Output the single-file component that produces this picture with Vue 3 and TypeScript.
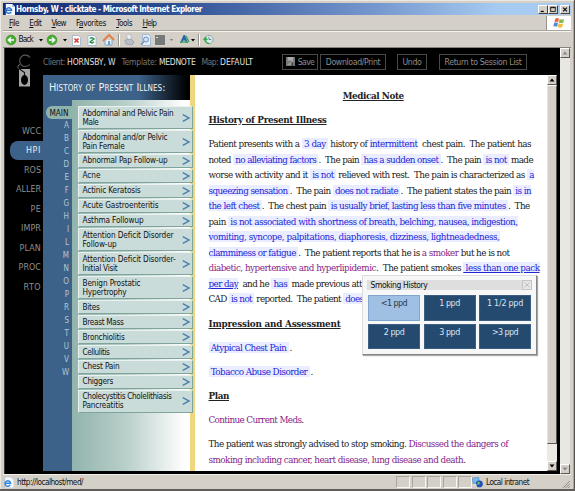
<script setup lang="ts">
import type { Directive } from 'vue'

type Kind = 'text' | 'field' | 'active' | 'option'
interface Segment { kind: Kind; text: string }
interface Line { width: number; segments: Segment[] }
interface Topic { lines: { text: string; width: number }[] }

// Spaces the letters of an element so that it fills the given width.
const vFit: Directive<HTMLElement, number> = {
  mounted(el, binding) {
    const count = (el.textContent ?? '').length
    const natural = el.getBoundingClientRect().width
    if (count > 0) el.style.letterSpacing = `${(binding.value - natural) / count}px`
  },
}

const t = (text: string): Segment => ({ kind: 'text', text })
const f = (text: string): Segment => ({ kind: 'field', text })
const o = (text: string): Segment => ({ kind: 'option', text })
const a = (text: string): Segment => ({ kind: 'active', text })

const history: Line[] = [
  { width: 322.5, segments: [t('Patient presents with a '), f(' 3 day '), t(' history of '), f('intermittent'), t('  chest pain.  The patient has')] },
  { width: 324.5, segments: [t('noted '), f(' no alleviating factors '), t('.  The pain '), f(' has a sudden onset '), t('.  The pain '), f(' is not '), t(' made')] },
  { width: 325.5, segments: [t('worse with activity and it '), f(' is not '), t(' relieved with rest.  The pain is characterized as '), f(' a')] },
  { width: 322.5, segments: [f('squeezing sensation '), t('.  The pain '), f(' does not radiate '), t('.  The patient states the pain '), f(' is in')] },
  { width: 321, segments: [f('the left chest '), t('.  The chest pain '), f(' is usually brief, lasting less than five minutes '), t('.  The')] },
  { width: 309, segments: [t('pain '), f(' is not associated with shortness of breath, belching, nausea, indigestion,')] },
  { width: 291, segments: [f('vomiting, syncope, palpitations, diaphoresis, dizziness, lightneadedness,')] },
  { width: 301, segments: [f('clamminess or fatigue '), t('.  The patient reports that he is '), o('a smoker'), t(' but he is not')] },
  { width: 331, segments: [o('diabetic, hypertensive and hyperlipidemic'), t('.  The patient smokes '), a(' less than one pack')] },
  { width: 153.5, segments: [a('per day'), t('  and he '), f(' has '), t(' made previous att')] },
  { width: 155, segments: [t('CAD '), f(' is not '), t(' reported.  The patient '), f(' does')] },
]
const impressions = [
  { text: ' Atypical Chest Pain ', width: 80 },
  { text: ' Tobacco Abuse Disorder ', width: 101 },
]
const advice: Line[] = [
  { width: 299.5, segments: [t('The patient was strongly advised to stop smoking. '), o('Discussed the dangers of')] },
  { width: 257, segments: [o('smoking including cancer, heart disease, lung disease and death'), t('.')] },
]

const topics: Topic[] = [
  { lines: [{ text: 'Abdominal and Pelvic Pain', width: 91 }, { text: 'Male', width: 16 }] },
  { lines: [{ text: 'Abdominal and/or Pelvic', width: 85 }, { text: 'Pain Female', width: 42 }] },
  { lines: [{ text: 'Abnormal Pap Follow-up', width: 85 }] },
  { lines: [{ text: 'Acne', width: 18 }] },
  { lines: [{ text: 'Actinic Keratosis', width: 58 }] },
  { lines: [{ text: 'Acute Gastroenteritis', width: 76 }] },
  { lines: [{ text: 'Asthma Followup', width: 61 }] },
  { lines: [{ text: 'Attention Deficit Disorder', width: 91 }, { text: 'Follow-up', width: 34 }] },
  { lines: [{ text: 'Attention Deficit Disorder-', width: 93 }, { text: 'Initial Visit', width: 35 }] },
  { lines: [{ text: 'Benign Prostatic', width: 58 }, { text: 'Hypertrophy', width: 44 }] },
  { lines: [{ text: 'Bites', width: 17 }] },
  { lines: [{ text: 'Breast Mass', width: 41 }] },
  { lines: [{ text: 'Bronchiolitis', width: 42 }] },
  { lines: [{ text: 'Cellulitis', width: 27 }] },
  { lines: [{ text: 'Chest Pain', width: 37 }] },
  { lines: [{ text: 'Chiggers', width: 30.5 }] },
  { lines: [{ text: 'Cholecystitis Cholelithiasis', width: 89 }, { text: 'Pancreatitis', width: 41 }] },
]

const letters = 'ABCDEFGHILMNOPRSTUVW'.split('')
const sections = [
  { name: 'WCC', width: 19 }, { name: 'HPI', width: 15 }, { name: 'ROS', width: 17 },
  { name: 'ALLER', width: 25 }, { name: 'PE', width: 10.5 }, { name: 'IMPR', width: 20 },
  { name: 'PLAN', width: 21.5 }, { name: 'PROC', width: 22.5 }, { name: 'RTO', width: 17.5 },
]
const menus = [
  { key: 'F', rest: 'ile', pre: '', width: 10 }, { key: 'E', rest: 'dit', pre: '', width: 12 },
  { key: 'V', rest: 'iew', pre: '', width: 14 }, { key: 'a', rest: 'vorites', pre: 'F', width: 30 },
  { key: 'T', rest: 'ools', pre: '', width: 16 }, { key: 'H', rest: 'elp', pre: '', width: 13.5 },
]
const facts = [
  { label: 'Client:', labelWidth: 22, value: 'HORNSBY, W', width: 48.5 },
  { label: 'Template:', labelWidth: 35.5, value: 'MEDNOTE', width: 36.5 },
  { label: 'Map:', labelWidth: 16.5, value: 'DEFAULT', width: 33 },
]
const choices = [
  { text: '<1 ppd', width: 26 }, { text: '1 ppd', width: 20.5 }, { text: '1 1/2 ppd', width: 36 },
  { text: '2 ppd', width: 20.5 }, { text: '3 ppd', width: 20.5 }, { text: '>3 ppd', width: 26 },
]
</script>

<template>
  <div class="window">
    <header class="titlebar">
      <svg class="ie" viewBox="0 0 12 12"><path d="M2 0h7l3 3v9H2z" fill="#f5f8ff" /><path d="M9 0v3h3" fill="#9cb4dc" /><path d="M7.8 8.7A3 3 0 1 1 8.2 6.7H2.5" fill="none" stroke="#2c78d4" stroke-width="1.6" /></svg>
      <span v-fit="186" class="caption">Hornsby, W : clicktate - Microsoft Internet Explorer</span>
      <div class="controls">
        <i><svg viewBox="0 0 10 9"><path d="M2 7h4" stroke="#000" stroke-width="1.6" /></svg></i>
        <i><svg viewBox="0 0 10 9"><path d="M2 1.5h6v5.5H2zM2 2.2h6" stroke="#000" fill="none" /></svg></i>
        <i class="apart"><svg viewBox="0 0 10 9"><path d="M2.5 2l5 5M7.5 2l-5 5" stroke="#000" stroke-width="1.3" /></svg></i>
      </div>
    </header>

    <nav class="menubar">
      <span v-for="m in menus" :key="m.rest" v-fit="m.width" class="menu">{{ m.pre }}<u>{{ m.key }}</u>{{ m.rest }}</span>
      <div class="throbber">
        <svg viewBox="0 0 14 14"><path d="M2.6 2Q5 .5 7 2L6 6.2Q4 5 1.6 6z" fill="#ec6a3c" /><path d="M7.8 2.3Q10 3.7 13 2.4L12 6.7Q9 7.7 6.8 6.4z" fill="#83b856" /><path d="M1.4 6.8Q4 5.8 5.8 7.1L4.8 11.4Q2.5 10 .3 11.2z" fill="#4a8cdc" /><path d="M6.6 7.3Q9 8.7 11.8 7.6L10.8 12Q8 13.2 5.6 11.7z" fill="#f4bd3b" /></svg>
      </div>
    </nav>

    <div class="toolbar">
      <svg width="198" height="16" viewBox="0 0 198 16">
        <g fill="#48ad32" stroke="#2c8b22" stroke-width=".6"><circle cx="7" cy="8" r="4.9" /><circle cx="48" cy="8" r="4.9" /></g>
        <path d="M10 8H5M7 5.4L4.3 8 7 10.6M45 8h5M48 5.4L50.7 8 48 10.6" fill="none" stroke="#fff" stroke-width="1.4" />
        <path d="M35 7h4l-2 2.4zM59 7h4l-2 2.4z" />
        <g stroke="#8da6c8" stroke-width=".7" fill="#fff"><path d="M68.500 3.500h6l2 2v8h-8z" /><path d="M84 3.500h6l2 2v8h-8z" /></g>
        <path d="M70.500 6.500l4 4M74.500 6.500l-4 4" stroke="#e03728" stroke-width="1.6" />
        <path d="M86 6.500q2-1.800 4 .4l-2 1.600M90 9.800q-2 2-4 .2l2-1.800" fill="none" stroke="#26944a" stroke-width="1.500" />
        <path d="M101 8v5h7V8" fill="#e7f0fa" stroke="#7fa6ca" /><path d="M99 9l6-6 5 5" fill="none" stroke="#df814b" stroke-width="2" /><path d="M104 9h2v4h-2z" fill="#679ccf" />
        <path d="M114.500 2v12" stroke="#96938d" /><path d="M115.500 2v12" stroke="#fff" />
        <path d="M122 3l4-1 2 5-3 2z" fill="#edf0f4" stroke="#a0a7af" stroke-width=".6" /><path d="M121 8l6-1 3 3-2 3-6-1z" fill="#b7bec9" stroke="#858e9b" stroke-width=".6" />
        <path d="M138.500 2.500h6l2 2v9h-8z" fill="#e4eefb" stroke="#88a7d3" stroke-width=".7" /><circle cx="142" cy="7.500" r="2.500" fill="#cee1f5" stroke="#6f8fb3" /><path d="M140 9.500l-3 3" stroke="#6f8fb3" stroke-width="1.500" />
        <path d="M151 3h10v10h-10z" fill="#77787a" /><path d="M152 5h2v1h-2z" fill="#ddd" /><path d="M166 7h3l-1.500 2z" fill="#777" />
        <path d="M176 11l3.500-8h1.500l3 8h-2l-.8-2.500H179L178 11z" fill="#2768ad" /><path d="M182 4l3 6M176 10h7" stroke="#45a46d" stroke-width="1.500" /><path d="M187 7h4l-2 2.400z" />
        <path d="M194.500 2v12" stroke="#96938d" /><path d="M195.500 2v12" stroke="#fff" />
      </svg>
      <span v-fit="14.500" class="back">Back</span>
      <svg class="recent" viewBox="0 0 12 12"><circle cx="6.500" cy="6" r="4.500" fill="#dcebe9" stroke="#7aa8ac" /><path d="M6.500 3.200V6h2.500" fill="none" stroke="#5b7f8e" /><path d="M7 10.500Q2.200 10 2.500 5M.7 6.600l2-2.500 2 2.500" fill="none" stroke="#36a84f" stroke-width="1.600" /></svg>
    </div>

    <div class="viewport">
      <div class="page">
        <div class="rail">
          <svg class="logo" viewBox="0 0 16 36"><path d="M14 4.500a5.700 5.700 0 1 0 -.3 7M4 11.500Q.5 13 2.500 15.500" fill="none" stroke="#5c5c5c" stroke-width="1.100" /><path d="M3 16h11v17.500H3z" fill="#a5a5a5" /><path d="M3.500 16l5 3.500v4" fill="none" stroke="#111" stroke-width="1.100" /><ellipse cx="8.500" cy="27" rx="3.500" ry="5" /></svg>
          <div class="sections">
            <div v-for="s in sections" :key="s.name" class="section" :class="{ current: s.name === 'HPI' }"><span v-fit="s.width">{{ s.name }}</span></div>
          </div>
        </div>

        <main class="main">
          <div class="actions">
            <div class="facts">
              <div v-for="x in facts" :key="x.label" class="fact"><span v-fit="x.labelWidth">{{ x.label }}</span><b v-fit="x.width">{{ x.value }}</b></div>
            </div>
            <div class="action save"><svg viewBox="0 0 10 10"><path d="M0 0h10v10H0z" fill="#777" /><path d="M2 0h6v4H2z" fill="#aaa" /><path d="M1 9l7-6v6z" fill="#999" /><path d="M6 6h2v4H6z" fill="#444" /></svg><span v-fit="16.500">Save</span></div>
            <div class="action print"><span v-fit="54.500">Download/Print</span></div>
            <div class="action undo"><span v-fit="19">Undo</span></div>
            <div class="action sessions"><span v-fit="77">Return to Session List</span></div>
          </div>

          <div class="workspace">
            <aside class="browser">
              <div class="heading"><span v-fit="116.500">History of Present Illnes:</span></div>
              <div class="columns">
                <div class="letters">
                  <div class="tab"><span v-fit="19">MAIN</span></div>
                  <div v-for="l in letters" :key="l" class="letter">{{ l }}</div>
                </div>
                <div class="topics">
                  <div v-for="(topic, i) in topics" :key="i" class="topic" :class="{ tall: topic.lines.length > 1 }">
                    <div class="topic-text"><div v-for="l in topic.lines" :key="l.text"><span v-fit="l.width">{{ l.text }}</span></div></div>
                    <svg viewBox="0 0 8 8"><path d="M.8 .7L6.800 4 .8 7.300" fill="none" stroke="#477fae" stroke-width="1.400" /></svg>
                  </div>
                </div>
              </div>
            </aside>

            <article class="note">
              <h1><span v-fit="61">Medical Note</span></h1>
              <h2><span v-fit="118">History of Present Illness</span></h2>
              <div class="para history">
                <div v-for="(line, i) in history" :key="i" class="line"><span v-fit="line.width"><span v-for="(s, j) in line.segments" :key="j" :class="s.kind">{{ s.text }}</span></span></div>
              </div>
              <h2><span v-fit="132">Impression and Assessment</span></h2>
              <p v-for="x in impressions" :key="x.text"><span v-fit="x.width" class="field">{{ x.text }}</span><span class="stop">.</span></p>
              <h2><span v-fit="20.500">Plan</span></h2>
              <p><span v-fit="95"><span class="option">Continue Current Meds</span>.</span></p>
              <div class="para">
                <div v-for="(line, i) in advice" :key="i" class="line"><span v-fit="line.width"><span v-for="(s, j) in line.segments" :key="j" :class="s.kind">{{ s.text }}</span></span></div>
              </div>
            </article>

            <div class="scroll inner">
              <i class="arrow"><svg viewBox="0 0 8 8"><path d="M1.500 5.500h5L4 2.500z" /></svg></i>
              <div class="thumb"></div><div class="track"></div>
              <i class="arrow"><svg viewBox="0 0 8 8"><path d="M1.500 2.500h5L4 5.500z" /></svg></i>
            </div>
          </div>
        </main>
      </div>
      <div class="scroll outer">
        <i class="arrow"><svg viewBox="0 0 8 8"><path d="M1.500 5.500h5L4 2.500z" fill="#888" /></svg></i>
        <div class="track"></div>
        <i class="arrow"><svg viewBox="0 0 8 8"><path d="M1.500 2.500h5L4 5.500z" fill="#888" /></svg></i>
      </div>
    </div>

    <footer class="status">
      <svg class="page-icon" viewBox="0 0 12 12"><path d="M2 0h7l3 3v9H2z" fill="#f5f8ff" stroke="#8aa3c8" stroke-width=".5" /><path d="M7.800 8.700A3 3 0 1 1 8.200 6.700H2.500" fill="none" stroke="#2c88dc" stroke-width="1.600" /></svg>
      <span v-fit="66">http://localhost/med/</span>
      <div class="cells"><i v-for="n in 5" :key="n"></i></div>
      <div class="zone">
        <svg viewBox="0 0 12 12"><path d="M.5 1l7-.5.5 6-7 .5z" fill="#79b8ed" stroke="#467fb7" stroke-width=".6" /><circle cx="8" cy="7.500" r="3.800" fill="#244fb4" /><path d="M6 5l3 1-1 2-2 1z" fill="#6bb96b" /><path d="M1 8h4v3z" fill="#d9e5ef" /></svg>
        <span v-fit="43">Local intranet</span>
      </div>
      <svg class="grip" viewBox="0 0 9 9"><path d="M1 9l8-8M4 9l5-5M7 9l2-2" stroke="#87837c" /></svg>
    </footer>

    <section class="popup">
      <div class="popup-title"><span v-fit="57">Smoking History</span><i><svg viewBox="0 0 8 8"><path d="M1.500 1.500l5 5M6.500 1.500l-5 5" stroke="#c2c2c2" /></svg></i></div>
      <div class="choices">
        <div v-for="(c, i) in choices" :key="c.text" class="choice" :class="{ picked: i === 0 }"><span v-fit="c.width">{{ c.text }}</span></div>
      </div>
    </section>
  </div>
</template>

<style>
body { margin: 0; overflow: hidden; }
</style>

<style scoped>
* { box-sizing: border-box; }
svg { display: block; flex: none; }
span, b { white-space: pre; flex: none; }
.window { position: relative; width: 575px; height: 491px; padding: 3px 3px 0; display: flex; flex-direction: column; background: #d4d0c8; border-right: 1px solid #57534f; border-bottom: 2px solid #625d5d; box-shadow: inset 1px 1px #ece9e2, inset -1px 0 #aaa69f; font-family: "DejaVu Sans Condensed", "DejaVu Sans", sans-serif; font-stretch: condensed; font-size: 8.200px; color: #111; }

.titlebar { height: 12px; flex: none; display: flex; align-items: center; background: linear-gradient(90deg, #102c72, #2b4c91 28%, #7596cd 65%, #a6caf0 87%); padding-left: 1px; }
.ie { width: 11px; height: 11px; }
.caption { margin-left: 1px; color: #fff; font-weight: bold; font-size: 8.100px; line-height: 12px; }
.controls { margin-left: auto; display: flex; padding-right: 1px; }
.controls i { width: 10px; height: 9px; background: #d4d0c8; border: 1px solid; border-color: #fff #45423e #45423e #fff; }
.controls .apart { margin-left: 2px; }
.controls svg { width: 8px; height: 7px; }

.menubar { height: 16px; flex: none; display: flex; align-items: center; padding-left: 6px; gap: 10.300px; border-bottom: 1px solid #aaa69f; }
.menu { line-height: 14px; padding-top: 1px; }
.menu u { text-underline-offset: 1px; }
.throbber { margin-left: auto; width: 25px; height: 14px; background: #fff; display: flex; justify-content: center; align-items: center; border-left: 1px solid #96928b; }
.throbber svg { width: 12px; height: 12px; }
.toolbar { height: 17px; flex: none; display: flex; align-items: center; position: relative; padding-left: 1px; border-top: 1px solid #f6f4ee; border-bottom: 1px solid #88847d; }
.back { position: absolute; left: 15.500px; line-height: 15px; }
.recent { width: 11px; height: 11px; margin-left: 1px; }

.viewport { height: 426px; flex: none; display: flex; margin: 0 1px 0 1px; }
.page { width: 556px; flex: none; display: flex; background: #000; border-left: 1px solid #393939; }
.rail { width: 38px; flex: none; }
.logo { width: 16px; height: 36px; margin: 5px 0 0 11px; }
.sections { margin-top: 32px; }
.section { height: 19.500px; display: flex; align-items: center; justify-content: flex-end; padding-right: 2px; margin-left: 5px; color: #8d8d8d; font-size: 8.900px; }
.section.current { background: #3c6289; color: #e2eaf2; border-radius: 8px 0 0 8px; }
.main { flex: 1; display: flex; flex-direction: column; }
.actions { height: 27px; flex: none; display: flex; align-items: center; }
.facts { width: 239px; display: flex; gap: 6px; }
.fact { display: flex; gap: 2px; color: #777; font-size: 8.500px; line-height: 14px; }
.fact b { font-weight: normal; color: #e0e0e0; }
.action { height: 16px; display: flex; align-items: center; justify-content: center; border: 1px solid #484848; color: #8e8e8e; font-size: 8.700px; }
.save { width: 36px; gap: 3px; }
.save svg { width: 9px; height: 9px; }
.print { width: 66px; margin-left: 2px; }
.undo { width: 30px; margin-left: 11px; }
.sessions { width: 88px; margin-left: 12px; }

.workspace { height: 396px; display: flex; }
.browser { width: 152px; flex: none; background: #3c6289; border-right: 5px solid #efd780; display: flex; flex-direction: column; }
.heading { height: 25px; flex: none; display: flex; align-items: center; padding-left: 6px; background: linear-gradient(90deg, #3c6289 65%, #000 98%); color: #eef3f8; font-variant: small-caps; font-size: 10.800px; }
.columns { flex: 1; display: flex; min-height: 0; }
.letters { width: 29px; flex: none; padding-top: 6px; }
.tab { height: 13px; margin: 0 0 0 3px; background: #8fb4ac; border-radius: 6px 0 0 6px; display: flex; align-items: center; padding-left: 3.500px; font-size: 8.200px; }
.letter { height: 13px; line-height: 14px; width: 26px; text-align: right; color: #b6c5d5; font-size: 8px; }
.topics { width: 118px; flex: none; padding: 6px 0 0 5.500px; background: linear-gradient(90deg, #91b4ad, #b8cec9 45%, #fff 96%); }
.topic { width: 115px; height: 13.900px; margin-bottom: 1px; display: flex; align-items: center; justify-content: space-between; padding: 0 2px 0 4px; background: #cadcd9; border: 1px solid; border-color: #eaf2f0 #7ea49c #7ea49c #eaf2f0; position: relative; }
.topic.tall { height: 23px; }
.topic svg { width: 8px; height: 8px; }
.topic-text { font-size: 8.200px; line-height: 9px; }

.note { width: 352px; flex: none; background: #fff; padding: 13px 0 0 13.500px; overflow: hidden; font-family: "DejaVu Serif Condensed", "DejaVu Serif", serif; font-stretch: condensed; font-size: 9.800px; color: #222; }
.note h1, .note h2, .note p { margin: 0; height: 24px; line-height: 15px; font-size: 9.800px; }
.note h1 { margin-right: 9px; text-align: center; }
.note h1 span, .note h2 span { display: inline-block; text-decoration: underline; text-underline-offset: 1px; }
.note h2, .note h1 { font-size: 9.800px; }
.para { line-height: 15.550px; }
.history { height: 180px; }
.line { height: 15.550px; }
.field, .active { color: #2525d8; background: #e9edff; }
.active { text-decoration: underline; }
.option { color: #862489; }
.stop { margin-left: 1px; }

.scroll { display: flex; flex-direction: column; }
.inner { width: 10px; background: #eceae5; }
.outer { width: 11px; background: #e9e7e1; }
.arrow { height: 10px; flex: none; display: flex; align-items: center; justify-content: center; background: #d4d0c8; border: 1px solid; border-color: #fff #5b5751 #5b5751 #fff; }
.arrow svg { width: 8px; height: 8px; }
.thumb { height: 359px; background: #d4d0c8; border: 1px solid; border-color: #fff #5b5751 #5b5751 #e7e4de; }
.track { flex: 1; }

.status { flex: 1; display: flex; align-items: center; position: relative; border-top: 1px solid #f2efe8; font-size: 8.200px; }
.page-icon { width: 11px; height: 11px; margin-right: 3px; }
.cells { margin-left: 313px; display: flex; gap: 1.500px; }
.cells i { width: 14px; height: 12px; border: 1px solid; border-color: #aaa69f #f8f6f0 #f8f6f0 #aaa69f; }
.zone { display: flex; align-items: center; gap: 3px; }
.zone svg { width: 11px; height: 11px; }
.grip { width: 8px; height: 8px; margin: 3px 1px 0 auto; }

.popup { position: absolute; left: 362px; top: 275px; width: 175px; height: 80px; padding: 4px; background: #f7f7f7; border: 1px solid; border-color: #ddd #858585 #858585 #ddd; box-shadow: 1px 1px 1px #aaa; }
.popup-title { width: 165px; height: 10px; display: flex; align-items: center; justify-content: space-between; padding-left: 3.500px; background: #dedede; font-size: 8.500px; line-height: 10px; }
.popup-title i { width: 10px; height: 10px; border: 1px solid #c5c5c5; background: #e6e6e6; }
.popup-title svg { width: 8px; height: 8px; }
.choices { display: grid; grid-template-columns: repeat(3, 52px); grid-template-rows: 26px 25px; gap: 3px 3.500px; margin: 5px 0 0 1px; }
.choice { display: flex; justify-content: center; padding-top: 1px; line-height: 12px; background: #254a70; border: 1px solid #3d5e80; color: #dbe5ef; font-size: 8.900px; }
.choice.picked { background: #9fc0e2; color: #27384b; border-color: #7fa5ce; }
</style>
